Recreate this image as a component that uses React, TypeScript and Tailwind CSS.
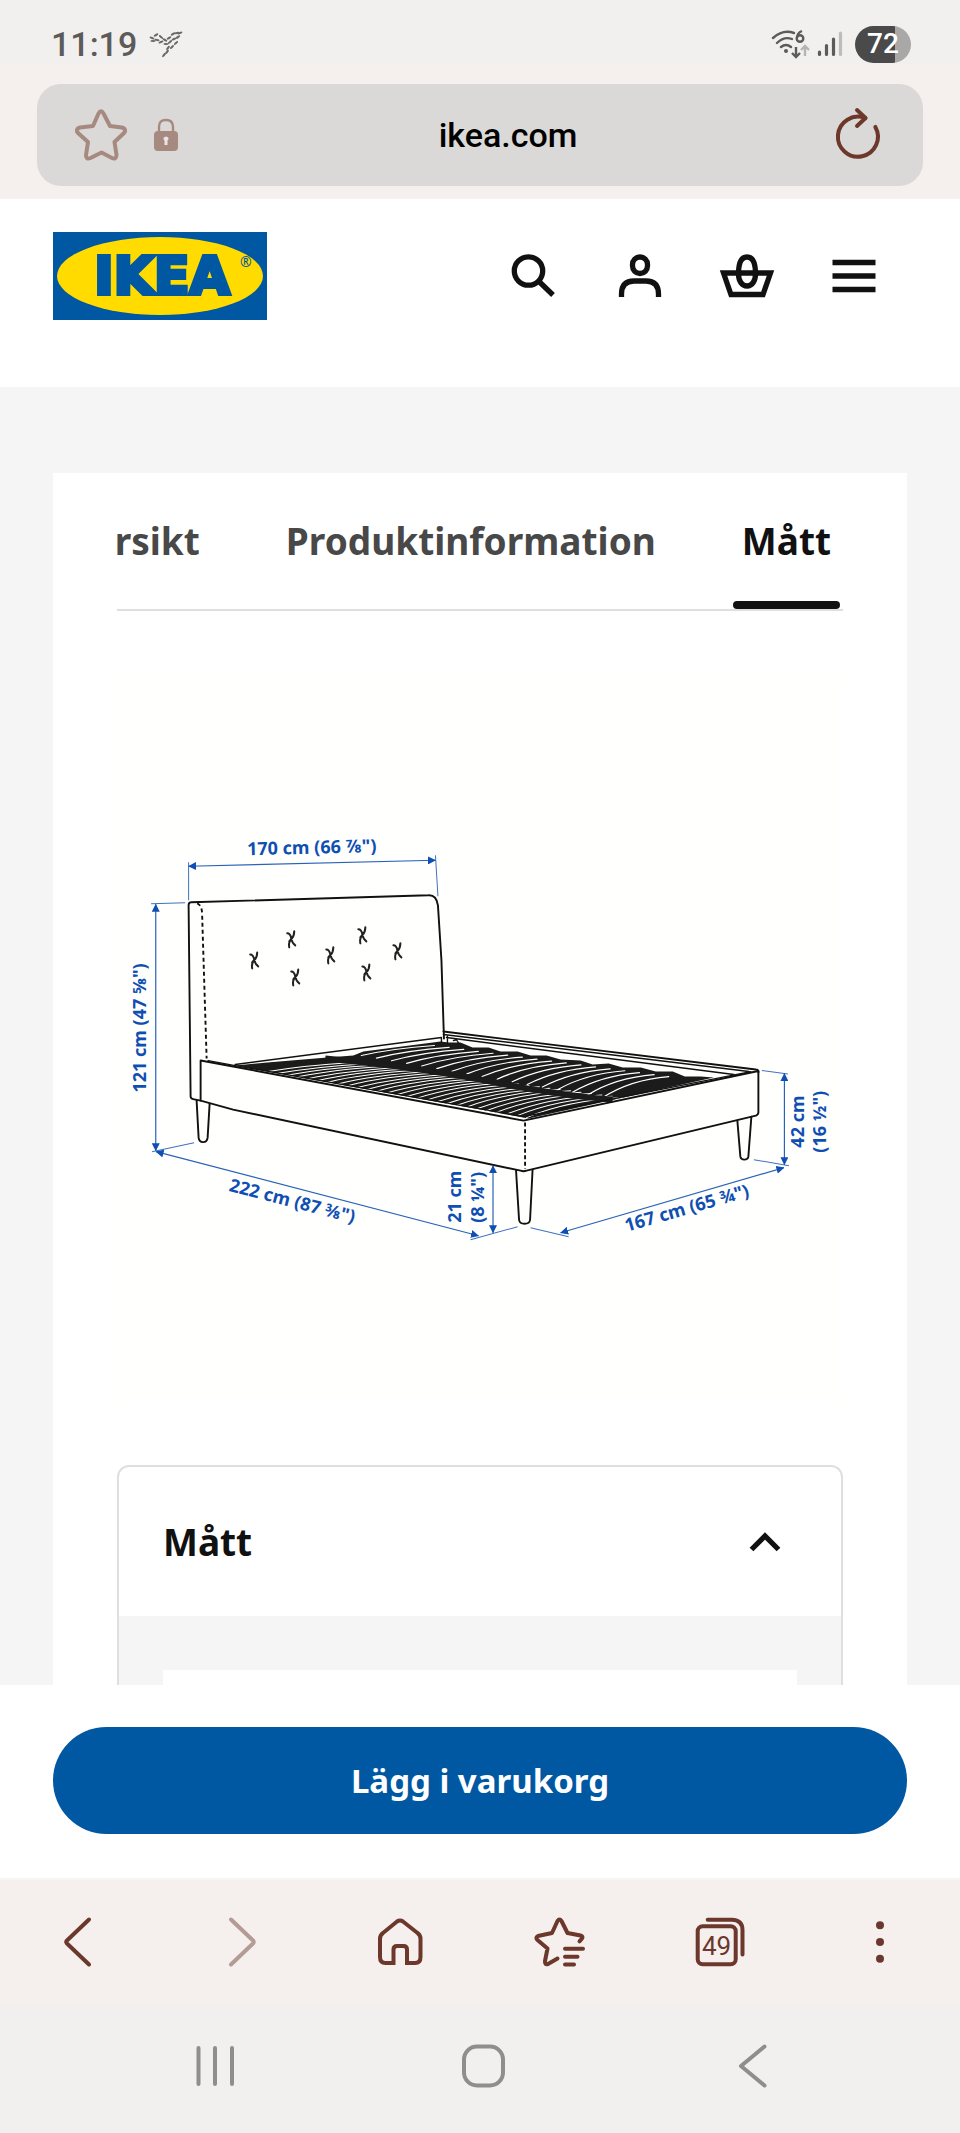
import { useState } from 'react'
import type { ReactNode } from 'react'

const tabs = ['Översikt', 'Produktinformation', 'Mått']

const stitches = [
  [254, 960],
  [291, 939],
  [362, 935],
  [330, 955],
  [397, 951],
  [295, 977],
  [366, 972],
]

const leaves = [
  [3, 8, 20], [7, 5, -30], [8, 10, 10], [12, 7, 40], [12, 12, -20], [16, 10, 30], [17, 14, 0], [21, 12, -40],
  [20, 8, -30], [25, 9, -25], [24, 4, -30], [29, 7, -35], [31, 3, -20], [27, 13, -40], [23, 17, -45], [19, 18, -50],
  [18, 22, -50], [15, 25, -50], [4, 11, 0], [28, 3, -10],
]

// Light gaps between the slats, from one rail to the other
function slatGaps(from: number[], to: number[], endFrom: number[], endTo: number[], count: number) {
  return Array.from({ length: count }, (_, i) => {
    const t = i / (count - 1)
    const x1 = from[0] + (to[0] - from[0]) * t
    const y1 = from[1] + (to[1] - from[1]) * t
    const x2 = endFrom[0] + (endTo[0] - endFrom[0]) * t
    const y2 = endFrom[1] + (endTo[1] - endFrom[1]) * t
    return `M${x1} ${y1}Q${x1 + (x2 - x1) * 0.42} ${y2 + 3} ${x2} ${y2}`
  }).join('')
}

function Icon({ children, className = 'size-14 text-[#6b382b]' }: { children: ReactNode; className?: string }) {
  return (
    <svg
      viewBox="0 0 56 56"
      className={className}
      fill="none"
      stroke="currentColor"
      strokeWidth="4"
      strokeLinecap="round"
      strokeLinejoin="round"
      aria-hidden="true"
    >
      {children}
    </svg>
  )
}

function StatusBar() {
  return (
    <div className="flex h-16 items-center bg-[#f1f0ee] pr-[49px] pl-[51px] pt-6 font-['Roboto',sans-serif] text-[#5c5b59]">
      <span className="text-[34px] leading-10 font-medium">11:19</span>
      <svg viewBox="0 0 34 28" className="ml-3 h-7 w-[34px]" aria-hidden="true">
        {leaves.map(([x, y, r], i) => (
          <ellipse key={i} cx={x} cy={y} rx="2.6" ry="1.1" fill="#6a6967" transform={`rotate(${r} ${x} ${y})`} />
        ))}
      </svg>
      <svg viewBox="0 0 40 30" className="ml-auto h-[30px] w-10" fill="none" stroke="#5c5b59" strokeWidth="2.4" aria-hidden="true">
        <path d="M2 9Q12 0 23 4M6 14Q13 7 21 10M10 18Q15 14 20 18" strokeLinecap="round" />
        <circle cx="15" cy="22" r="2" fill="#5c5b59" stroke="none" />
        <path d="M31 2Q26 4 26 9" />
        <circle cx="29" cy="9.5" r="3.3" />
        <path d="M25 18V28M21 24L25 28L29 24" />
        <path d="M34 27V17M30 21L34 17L38 21" stroke="#b5b4b2" />
      </svg>
      <svg viewBox="0 0 26 26" className="ml-[6px] size-[26px]" strokeWidth="3.2" strokeLinecap="round" stroke="#5c5b59" aria-hidden="true">
        <path d="M2.5 21V23.5M9.5 14.5V23.5M16.5 8V23.5" />
        <path d="M23.5 2V23.5" stroke="#bdbcba" />
      </svg>
      <div className="ml-3 flex h-[37px] w-14 items-center justify-center rounded-full bg-linear-to-r from-[#4a4a4a] from-72% to-[#a9a8a6] to-72% text-[28px] leading-8 font-medium text-white">
        72
      </div>
    </div>
  )
}

function AddressBar() {
  return (
    <div className="bg-[#f5efee] px-[37px] pt-5 pb-[13px]">
      <div className="flex h-[102px] items-center rounded-3xl bg-[#dad9d7] pr-[34px] pl-[36px]">
        <button aria-label="Lägg till bokmärke">
          <Icon className="size-14 text-[#a68a80]">
            <path d="M25.5 6.5Q28 2 30.5 6.5L37 19L49 20.5Q54 22 51 26L41.5 35L43.5 48Q43 53 39 51L28.5 45.5L17.5 51Q13 53 13 48L15 35L5 26Q2 22 7 20.5L20 19Z" />
          </Icon>
        </button>
        <svg viewBox="0 0 26 34" className="ml-6 h-[34px] w-[26px]" aria-hidden="true">
          <path d="M6 14V9Q6 2 13 2Q20 2 20 9V14" fill="none" stroke="#a68a80" strokeWidth="2.4" />
          <rect x="1" y="13" width="24" height="20" rx="4" fill="#a68a80" />
          <path d="M11.5 27V22.5Q10 21 10.5 20Q11.5 18.5 13 18.5Q14.5 18.5 15.5 20Q16 21 14.5 22.5V27Z" fill="#e9e4e1" />
        </svg>
        <input
          type="text"
          aria-label="Adress"
          defaultValue="ikea.com"
          className="min-w-0 flex-1 bg-transparent pl-1 text-center font-['Roboto',sans-serif] text-[34px] leading-10 font-medium text-black outline-none"
        />
        <button aria-label="Läs in igen">
          <Icon>
            <path d="M41 18A20 20 0 1 1 30 10.5" transform="rotate(7 26 30)" />
            <path d="M24 3L32.5 11L24 19" />
          </Icon>
        </button>
      </div>
    </div>
  )
}

function IkeaLogo() {
  return (
    <svg viewBox="0 0 214 88" className="h-[88px] w-[214px]" role="img" aria-label="IKEA">
      <rect width="214" height="88" fill="#0058a3" />
      <ellipse cx="107" cy="44" rx="103" ry="39" fill="#ffdb00" />
      <text
        x="109"
        y="62"
        textAnchor="middle"
        fill="#0058a3"
        stroke="#0058a3"
        strokeWidth="4"
        className="font-['DejaVu_Sans',sans-serif] text-[52px] font-bold"
      >
        IKEA
      </text>
      <text x="187" y="35" fill="#0058a3" className="font-['Noto_Sans',sans-serif] text-[14px]">®</text>
    </svg>
  )
}

function SiteHeader() {
  const iconClass = 'size-16 text-[#111111]'
  return (
    <header className="flex items-start justify-between bg-white px-[53px] pt-[33px] pb-[67px]">
      <a href="#start" aria-label="IKEA startsida">
        <IkeaLogo />
      </a>
      <nav className="flex h-[88px] items-center">
        <button aria-label="Sök" className="flex w-[107px] justify-center">
          <svg viewBox="0 0 64 64" className={iconClass} fill="none" stroke="currentColor" strokeWidth="5.3" aria-hidden="true">
            <circle cx="27.5" cy="27" r="14.2" />
            <path d="M37.5 37L52 51" />
          </svg>
        </button>
        <button aria-label="Logga in" className="flex w-[107px] justify-center">
          <svg viewBox="0 0 64 64" className={iconClass} fill="none" stroke="currentColor" strokeWidth="5.3" aria-hidden="true">
            <rect x="24.5" y="13" width="15" height="16.5" rx="7.5" />
            <path d="M13.5 53V50Q13.5 37 26 37H38Q50.5 37 50.5 50V53" />
          </svg>
        </button>
        <button aria-label="Varukorg" className="flex w-[107px] justify-center">
          <svg viewBox="0 0 64 64" className={iconClass} fill="none" stroke="currentColor" strokeWidth="5.3" aria-hidden="true">
            <path d="M8.5 29H55.5L48 50.5H16Z" />
            <path d="M32 13C26 13 23.500 20 23.500 30C23.500 37 27 42 32 42S40.500 37 40.500 30C40.500 20 38 13 32 13Z" />
          </svg>
        </button>
        <button aria-label="Meny" className="flex w-[107px] justify-center">
          <svg viewBox="0 0 64 64" className={iconClass} fill="none" stroke="currentColor" strokeWidth="5.3" aria-hidden="true">
            <path d="M10.5 18.5H53.5M10.5 32H53.5M10.5 45.5H53.5" />
          </svg>
        </button>
      </nav>
    </header>
  )
}

function BedDrawing() {
  return (
    <svg viewBox="117 675 725 725" className="block w-full" role="img" aria-label="Måttskiss av sängstomme">
      <defs>
        <marker id="arrow" viewBox="0 0 8 8" refX="7.5" refY="4" markerWidth="8" markerHeight="8" markerUnits="userSpaceOnUse" orient="auto-start-reverse">
          <path d="M0 0L8 4L0 8Z" fill="#0f4fb3" />
        </marker>
      </defs>
      <rect x="117" y="675" width="725" height="725" fill="#fffffd" />

      {/* Slats */}
      <path
        d="M235 1065L267 1062L327 1057L353 1055L363 1051L440 1041L448 1042L460 1042L472 1047L488 1047L500 1051L517 1051L530 1055L546 1055L560 1059L580 1060L592 1064L608 1063L622 1067L640 1067L655 1071L672 1071L684 1076L700 1076L713 1077L528 1118L480 1109L440 1102Z"
        fill="#1b1b1b"
      />
      <g fill="none" stroke="#fffffd" strokeLinecap="round">
        <path d={slatGaps([268, 1071], [526, 1117], [352, 1062], [622, 1097], 27)} strokeWidth="1" />
        <path d={slatGaps([361, 1055], [602, 1097], [434, 1045], [668, 1076], 17)} strokeWidth="1.2" />
      </g>
      <path d="M325 1058Q420 1067 490 1081T612 1099" fill="none" stroke="#1b1b1b" strokeWidth="6" />

      <g fill="none" stroke="#111" strokeWidth="1.9" strokeLinecap="round" strokeLinejoin="round">
        {/* Headboard */}
        <path d="M200.5 1100L193 1098.5Q190.5 1098 190.5 1096L188.5 905Q188.5 902 191 902L428 895Q436 894.5 437.5 905L441 960L443.5 1038" />
        <path d="M197 903Q202 905 202 914L206.5 1058" strokeDasharray="4 3" strokeLinecap="butt" />
        {/* Side rail and foot end */}
        <path d="M200.5 1100V1060L523 1120L757.5 1070.5V1112Q757.5 1114 755 1115L526 1170Q523 1171 520 1170L233 1109L200.5 1100" />
        <path d="M208 1060L235 1065L523 1116L750 1071" strokeWidth="1.3" />
        <path d="M524.5 1122V1168" strokeDasharray="4 2.5" strokeLinecap="butt" />
        {/* Back rail */}
        <path d="M443 1031L755 1069Q758 1069 757.5 1072" />
        <path d="M443 1034L748 1071M446 1037L733 1074M235 1064L441 1037V1042M447 1036V1043M453 1040Q457 1038 458 1043" strokeWidth="1.4" />
        {/* Legs */}
        <path d="M196.5 1100L198.5 1137Q199 1141.5 203 1141.5Q207 1141.5 207.5 1137L209.5 1103" />
        <path d="M515.5 1170L518.5 1219Q519 1223 524 1223Q529 1223 529.5 1219L532 1169" />
        <path d="M736.5 1120L739.5 1156Q740 1159 743.5 1159Q747 1159 747.5 1156L750.5 1116" />
      </g>

      <g fill="none" stroke="#222" strokeWidth="2" strokeLinecap="round">
        {stitches.map(([x, y]) => (
          <path key={`${x}-${y}`} d="M-4-6Q-1-6 0-1T4 6M3-8Q3-3 0 0T-2 8M-2 2L2-3" transform={`translate(${x} ${y})`} />
        ))}
      </g>

      {/* Extension lines */}
      <path
        d="M188.5 862V900M435 855L437.5 896M151 903.5L185 902.5M152 1151L194 1142M470 1239L517 1226M530 1227L568 1236M753 1159L788 1165M761 1070L787 1073.5"
        fill="none"
        stroke="#3f72c0"
        strokeWidth="1"
      />
      {/* Dimension lines */}
      <g stroke="#2a62ba" strokeWidth="1.2">
        <path d="M188.5 866L435 860" markerStart="url(#arrow)" markerEnd="url(#arrow)" />
        <path d="M155.7 904V1150" markerStart="url(#arrow)" markerEnd="url(#arrow)" />
        <path d="M156 1151L478 1235" markerStart="url(#arrow)" markerEnd="url(#arrow)" />
        <path d="M492.5 1165V1232" markerStart="url(#arrow)" markerEnd="url(#arrow)" />
        <path d="M560 1232L783 1167" markerStart="url(#arrow)" markerEnd="url(#arrow)" />
        <path d="M783.5 1073V1164" markerStart="url(#arrow)" markerEnd="url(#arrow)" />
      </g>

      <g fill="#0f4fb3" className="font-['Noto_Sans',sans-serif] text-[18px] font-bold">
        <text transform="translate(247 855) rotate(-1.4)">170 cm (66 ⅞")</text>
        <text transform="translate(146 1092) rotate(-90)">121 cm (47 ⅝")</text>
        <text transform="translate(228 1190) rotate(14.5)">222 cm (87 ⅜")</text>
        <text transform="translate(461 1222) rotate(-90)">21 cm</text>
        <text transform="translate(483 1222) rotate(-90)">(8 ¼")</text>
        <text transform="translate(626 1231) rotate(-16)">167 cm (65 ¾")</text>
        <text transform="translate(803 1147) rotate(-90)">42 cm</text>
        <text transform="translate(825 1152) rotate(-90)">(16 ½")</text>
      </g>
    </svg>
  )
}

function ProductCard() {
  const [activeTab, setActiveTab] = useState('Mått')
  const [open, setOpen] = useState(true)

  return (
    <div className="flex flex-1 flex-col bg-white px-16 pt-11">
      {/* Tabs */}
      <div role="tablist" className="flex justify-end gap-[68px] overflow-hidden border-b-2 border-[#dfdfdf] pr-[3px]">
        {tabs.map((tab) => (
          <button
            key={tab}
            role="tab"
            aria-selected={activeTab === tab}
            onClick={() => setActiveTab(tab)}
            className={`flex shrink-0 flex-col text-[37px] leading-[48px] font-bold ${
              activeTab === tab ? 'text-[#111111]' : 'text-[#484848]'
            }`}
          >
            <span className="px-[9px] pb-9">{tab}</span>
            <span className={`h-2 w-full rounded-full ${activeTab === tab ? 'bg-[#111111]' : 'bg-transparent'}`} />
          </button>
        ))}
      </div>

      <div className="py-16">
        <BedDrawing />
      </div>

      {/* Accordion */}
      <section className="flex flex-1 flex-col overflow-hidden rounded-t-xl border-2 border-b-0 border-[#dfdfdf]">
        <button
          aria-expanded={open}
          onClick={() => setOpen(!open)}
          className="flex h-[149px] items-center justify-between pr-[60px] pl-11 text-[37px] leading-[48px] font-bold text-[#111111]"
        >
          Mått
          <svg viewBox="0 0 32 20" className={`h-5 w-8 ${open ? '' : 'rotate-180'}`} fill="none" stroke="currentColor" strokeWidth="5.3" aria-hidden="true">
            <path d="M2.5 17.5L16 4L29.5 17.5" />
          </svg>
        </button>
        {open && (
          <div className="flex flex-1 flex-col bg-[#f5f5f5] px-11 pt-[54px]">
            <div className="min-h-[15px] flex-1 bg-white" />
          </div>
        )}
      </section>
    </div>
  )
}

function BrowserToolbar() {
  const cell = 'flex items-center justify-center'
  return (
    <nav className="grid h-[127px] grid-cols-6 border-t-2 border-[#f6f5f3] bg-[#f5efee]">
      <button aria-label="Bakåt" className={cell}>
        <Icon><path d="M37 4.5L15 25.5Q13.5 27 15 28.5L37 49.5" /></Icon>
      </button>
      <button aria-label="Framåt" className={cell} disabled>
        <Icon className="size-14 text-[#b49c95]"><path d="M19 4.5L41 25.5Q42.5 27 41 28.5L19 49.5" /></Icon>
      </button>
      <button aria-label="Hem" className={cell}>
        <Icon><path d="M8 24Q8 20 11 18L25 6.5Q28 4.5 31 6.5L45.5 18Q48.5 20 48.5 24V42Q48.5 48 43 48H35V34.5Q35 31 31.5 31H25Q21.5 31 21.5 34.5V48H13.5Q8 48 8 42Z" strokeLinejoin="miter" /></Icon>
      </button>
      <button aria-label="Bokmärken" className={cell}>
        <Icon>
          <path d="M25.5 43.5L16 49Q12.5 50 13 46L15.5 33.5L5.5 25Q3 22.5 6 21L20 18L25.5 6Q27.5 3 29.5 6L35.5 18L48.5 20.5Q51.5 21.5 50 23.5L47.5 26.3" />
          <path d="M33 33.7H51M33 41.7H45.5M33 49.5H42" />
        </Icon>
      </button>
      <button aria-label="Flikar" className={cell}>
        <Icon>
          <rect x="5.7" y="11.3" width="38" height="38" rx="5" />
          <path d="M15.7 4.7H40Q50.5 5 50.5 15V39.5" />
          <text x="24.5" y="39.5" textAnchor="middle" fill="currentColor" stroke="none" className="font-['Roboto',sans-serif] text-[26px]">49</text>
        </Icon>
      </button>
      <button aria-label="Mer" className={cell}>
        <Icon>
          <g fill="currentColor" stroke="none">
            <circle cx="28" cy="10.3" r="4" />
            <circle cx="28" cy="27" r="4" />
            <circle cx="28" cy="43.7" r="4" />
          </g>
        </Icon>
      </button>
    </nav>
  )
}

function SystemNav() {
  const iconClass = 'size-14 text-[#8e8e8c]'
  return (
    <nav className="grid h-32 grid-cols-3 bg-[#f1f0ee] pr-[72px] pb-[6px] pl-20">
      <button aria-label="Senaste appar" className="flex items-center justify-center">
        <Icon className={iconClass}><path d="M11.5 10V46M28 10V46M45 10V46" /></Icon>
      </button>
      <button aria-label="Startskärm" className="flex items-center justify-center">
        <Icon className={iconClass}><rect x="8" y="8.5" width="39" height="39" rx="13" /></Icon>
      </button>
      <button aria-label="Tillbaka" className="flex items-center justify-center">
        <Icon className={iconClass}><path d="M39.5 8.5L16 28L39.5 47.5" /></Icon>
      </button>
    </nav>
  )
}

export default function App() {
  return (
    <div className="flex min-h-screen w-full flex-col font-['Noto_Sans',sans-serif]">
      <StatusBar />
      <AddressBar />
      <SiteHeader />

      <main className="flex flex-1 flex-col bg-[#f5f5f5] px-[53px] pt-[86px]">
        <ProductCard />
      </main>

      {/* Buy bar */}
      <div className="bg-white px-[53px] pt-[42px] pb-11">
        <button className="h-[107px] w-full rounded-full bg-[#0058a3] text-[33px] leading-10 font-bold text-white">
          Lägg i varukorg
        </button>
      </div>

      <BrowserToolbar />
      <SystemNav />
    </div>
  )
}
